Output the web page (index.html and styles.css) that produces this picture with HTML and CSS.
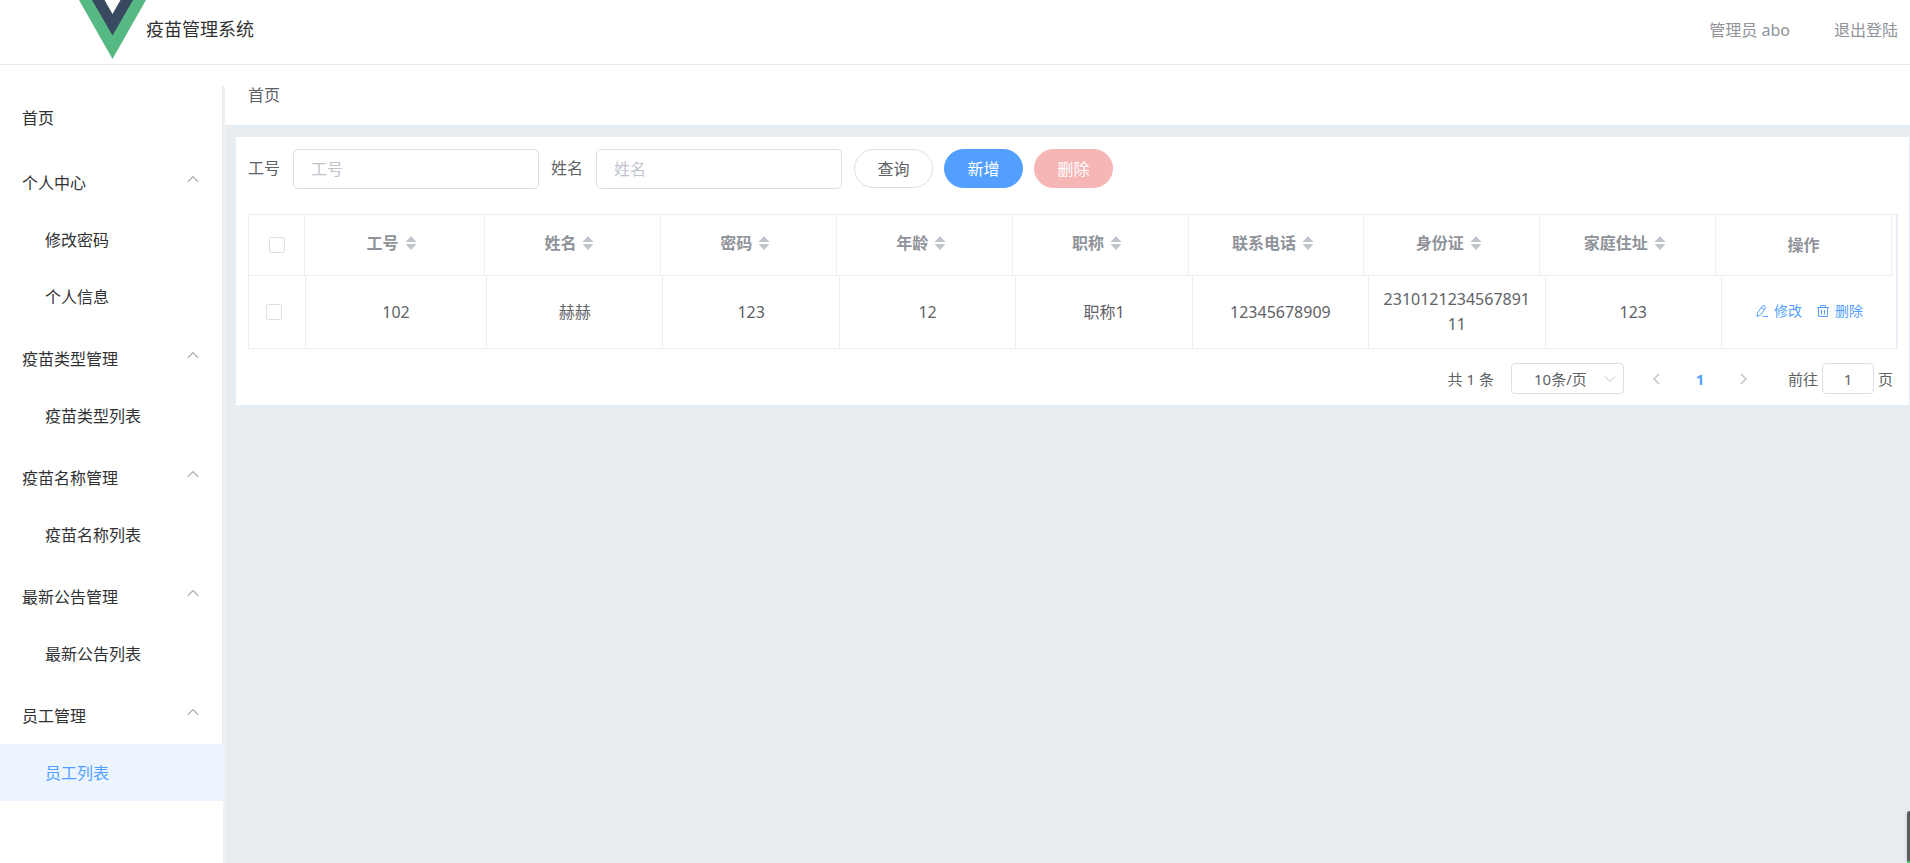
FILE: index.html
```html
<!DOCTYPE html>
<html lang="zh-CN">
<head>
<meta charset="utf-8">
<title>疫苗管理系统</title>
<link rel="stylesheet" href="styles.css">
</head>
<body>
<svg class="defs" aria-hidden="true">
  <symbol id="up" viewBox="0 0 12 12"><path d="M1.500 8.500 6 4l4.500 4.500" fill="none" stroke="currentColor"/></symbol>
  <symbol id="down" viewBox="0 0 12 12"><path d="M1 3.500 6 8.500l5-5" fill="none" stroke="currentColor"/></symbol>
  <symbol id="prev" viewBox="0 0 12 12"><path d="M9 1 4 6l5 5" fill="none" stroke="currentColor" stroke-width="1.500"/></symbol>
  <symbol id="next" viewBox="0 0 12 12"><path d="m3 1 5 5-5 5" fill="none" stroke="currentColor" stroke-width="1.500"/></symbol>
  <symbol id="sort" viewBox="0 0 12 16"><path d="M.5 7 6 1l5.500 6zM.5 9 6 15l5.500-6z" fill="currentColor"/></symbol>
  <symbol id="edit" viewBox="0 0 14 14"><path d="M2 12.500 2.500 8.800 7.300 2q.8-1 1.800-.3l1 .7q1 .8.300 1.800L5.600 11zM6.300 3.500l3 2.200M7.500 12.500H13" fill="none" stroke="currentColor"/></symbol>
  <symbol id="trash" viewBox="0 0 14 14"><path d="M1 3.500h12M2.500 3.500v9h9v-9M4.500 3.500v-2h5v2M5.500 6v4.500M8.500 6v4.500" fill="none" stroke="currentColor"/></symbol>
</svg>

<header class="header">
  <svg class="logo" viewBox="0 0 67 59" aria-hidden="true">
    <path d="M0 0h14l19.500 34L53 0h14L33.500 59z" fill="#56b882"/>
    <path d="M13 0h12.500l8 14 8-14H54L33.500 35.500z" fill="#39495f"/>
  </svg>
  <h1 class="title">疫苗管理系统</h1>
  <div class="account">
    <span>管理员 abo</span>
    <a class="logout" href="#">退出登陆</a>
  </div>
</header>

<div class="layout">
  <aside class="aside">
    <nav class="menu">
      <a class="entry home" href="#">首页</a>
      <section class="group">
        <button class="entry">个人中心<svg class="arrow"><use href="#up"/></svg></button>
        <a class="entry sub" href="#">修改密码</a>
        <a class="entry sub" href="#">个人信息</a>
      </section>
      <section class="group">
        <button class="entry">疫苗类型管理<svg class="arrow"><use href="#up"/></svg></button>
        <a class="entry sub" href="#">疫苗类型列表</a>
      </section>
      <section class="group">
        <button class="entry">疫苗名称管理<svg class="arrow"><use href="#up"/></svg></button>
        <a class="entry sub" href="#">疫苗名称列表</a>
      </section>
      <section class="group">
        <button class="entry">最新公告管理<svg class="arrow"><use href="#up"/></svg></button>
        <a class="entry sub" href="#">最新公告列表</a>
      </section>
      <section class="group">
        <button class="entry">员工管理<svg class="arrow"><use href="#up"/></svg></button>
        <a class="entry sub active" href="#">员工列表</a>
      </section>
    </nav>
  </aside>

  <main class="main">
    <div class="breadcrumb">首页</div>
    <div class="card">
      <form class="filters">
        <label for="no">工号</label>
        <input class="field" id="no" type="text" placeholder="工号">
        <label for="name">姓名</label>
        <input class="field" id="name" type="text" placeholder="姓名">
        <div class="buttons">
          <button class="btn" type="button">查询</button>
          <button class="btn primary" type="button">新增</button>
          <button class="btn danger" type="button" disabled>删除</button>
        </div>
      </form>

      <div class="grid">
        <table class="head">
          <colgroup><col class="c-check"><col class="c-no"><col span="8"></colgroup>
          <thead><tr>
            <th><input class="check" type="checkbox" aria-label="全选"></th>
            <th><span class="sortable">工号<svg class="sort"><use href="#sort"/></svg></span></th>
            <th><span class="sortable">姓名<svg class="sort"><use href="#sort"/></svg></span></th>
            <th><span class="sortable">密码<svg class="sort"><use href="#sort"/></svg></span></th>
            <th><span class="sortable">年龄<svg class="sort"><use href="#sort"/></svg></span></th>
            <th><span class="sortable">职称<svg class="sort"><use href="#sort"/></svg></span></th>
            <th><span class="sortable">联系电话<svg class="sort"><use href="#sort"/></svg></span></th>
            <th><span class="sortable">身份证<svg class="sort"><use href="#sort"/></svg></span></th>
            <th><span class="sortable">家庭住址<svg class="sort"><use href="#sort"/></svg></span></th>
            <th>操作</th>
          </tr></thead>
        </table>
        <table class="body">
          <colgroup><col class="c-check"><col class="c-no"><col span="7"><col class="c-action"></colgroup>
          <tbody><tr>
            <td class="pick"><input class="check" type="checkbox" aria-label="选择 102"></td>
            <td>102</td>
            <td>赫赫</td>
            <td>123</td>
            <td>12</td>
            <td>职称1</td>
            <td>12345678909</td>
            <td>231012123456789111</td>
            <td>123</td>
            <td><div class="actions">
              <button class="link"><svg class="icon"><use href="#edit"/></svg>修改</button>
              <button class="link"><svg class="icon"><use href="#trash"/></svg>删除</button>
            </div></td>
          </tr></tbody>
        </table>
      </div>

      <div class="pagination">
        <span class="total">共 1 条</span>
        <div class="size">
          <select class="sizes" aria-label="每页条数"><option>10条/页</option></select>
          <svg class="caret"><use href="#down"/></svg>
        </div>
        <div class="pager">
          <button class="page" aria-label="上一页" disabled><svg class="turn"><use href="#prev"/></svg></button>
          <button class="page current">1</button>
          <button class="page" aria-label="下一页" disabled><svg class="turn"><use href="#next"/></svg></button>
        </div>
        <label class="jump">前往<input class="goto" type="text" value="1">页</label>
      </div>
    </div>
  </main>
</div>
<div class="dock"></div>
</body>
</html>
```
FILE: styles.css
```css
* { box-sizing: border-box; }

body {
  margin: 0;
  min-height: 100vh;
  display: flex;
  flex-direction: column;
  background: #fff;
  color: #606266;
  font: 16px/24px "Noto Sans", "Noto Sans CJK SC", sans-serif;
}

button, input, select { font: inherit; color: inherit; margin: 0; }
button { border: 0; background: none; cursor: pointer; }
a { color: inherit; text-decoration: none; }
svg { display: block; flex: none; }
.defs { position: absolute; width: 0; height: 0; }

.header {
  display: flex;
  align-items: flex-start;
  height: 65px;
  padding: 0 12px 0 79px;
  border-bottom: 1px solid #e6eaee;
}
.logo { width: 67px; height: 59px; }
.title {
  margin: 0;
  line-height: 58px;
  font-size: 18px;
  font-weight: 400;
  color: #303133;
}
.account {
  display: flex;
  gap: 44px;
  margin-left: auto;
  line-height: 60px;
  color: #909399;
}

.layout { flex: 1; display: flex; }

.aside {
  flex: none;
  width: 225px;
  margin-top: 21px;
  border-right: 2px solid #f1f2f3;
}
.menu { padding-top: 3px; border-right: 1px solid #e6e6e6; }
.entry {
  display: flex;
  align-items: center;
  justify-content: space-between;
  width: 100%;
  height: 57px;
  padding: 0 22px;
  color: #303133;
  text-align: left;
}
.sub { padding-left: 45px; }
.home { margin-bottom: 8px; }
.group { margin-bottom: 5px; }
.group:last-child { margin-bottom: 0; }
.active { width: auto; margin-right: -1px; background: #ecf5ff; color: #539fff; }
.arrow { width: 14px; height: 14px; margin-bottom: 8px; color: #a6a9ae; }

.main { flex: 1; min-width: 0; background: #e8edf1; }
.breadcrumb { padding: 18px 23px; background: #fff; }
.card { margin: 12px 1px 0 11px; padding: 12px 11px 11px 12px; background: #fff; }

.filters { display: flex; gap: 12px; height: 40px; }
.filters label { padding-right: 1px; line-height: 38px; }
.field {
  width: 246px;
  padding: 0 17px;
  border: 1px solid #dcdfe6;
  border-radius: 5px;
  background: #fff;
}
.field::placeholder { color: #c0c4cc; opacity: 1; }
.buttons { display: flex; gap: 11px; }
.btn {
  width: 79px;
  height: 39px;
  padding: 0;
  border: 1px solid #dcdfe6;
  border-radius: 20px;
}
.primary { border-color: #539fff; background: #539fff; color: #fff; }
.danger { border-color: #f6b6b6; background: #f6b6b6; color: #fff; }

.grid {
  margin-top: 25px;
  border: 1px solid #ebeef5;
  border-right-width: 2px;
}
table { width: 100%; table-layout: fixed; border-collapse: separate; border-spacing: 0; }
.head { width: calc(100% - 4px); }
.head .c-check { width: 56px; }
.head .c-no { width: 180px; }
.body .c-check { width: 57px; }
.body .c-no { width: 181px; }
.body .c-action { width: 174px; }
th, td { padding: 0 12px; border-right: 1px solid #ebeef5; text-align: center; word-break: break-all; }
th { height: 61px; border-bottom: 1px solid #ebeef5; color: #909399; font-weight: 700; }
td { height: 72px; line-height: 25px; }
.body td:last-child { border-right: 0; }
.pick { padding-right: 18px; }
.sortable { display: flex; align-items: center; justify-content: center; padding-bottom: 4px; white-space: nowrap; }
.sort { width: 12px; height: 16px; margin: 0 6px; color: #c0c4cc; }
.check {
  display: block;
  appearance: none;
  width: 16px;
  height: 16px;
  margin: 0 auto;
  border: 1px solid #dcdfe6;
  border-radius: 2px;
  background: #fff;
}

.actions { display: flex; justify-content: center; gap: 14px; padding-bottom: 3px; }
.link { display: flex; align-items: center; gap: 5px; padding: 0; font-size: 14px; color: #539fff; white-space: nowrap; }
.icon { width: 14px; height: 14px; }

.pagination {
  display: flex;
  align-items: center;
  justify-content: flex-end;
  height: 31px;
  margin-top: 14px;
  padding-right: 5px;
  font-size: 15px;
}
.total { margin-right: 17px; }
.size { position: relative; }
.sizes {
  appearance: none;
  display: block;
  width: 113px;
  height: 31px;
  padding: 0 22px;
  border: 1px solid #dcdfe6;
  border-radius: 4px;
  background: #fff;
}
.caret { position: absolute; right: 8px; top: 10px; width: 12px; height: 12px; color: #c0c4cc; pointer-events: none; }
.pager { display: flex; margin: 0 22px 0 10px; }
.page { display: flex; align-items: center; justify-content: center; width: 44px; height: 31px; padding: 0; }
.current { color: #539fff; font-weight: 700; }
.turn { width: 12px; height: 12px; color: #c0c4cc; }
.jump { display: flex; align-items: center; gap: 4px; }
.goto { width: 52px; height: 31px; padding: 0 4px; border: 1px solid #dcdfe6; border-radius: 4px; text-align: center; }

.dock {
  position: fixed;
  right: 0;
  bottom: 0;
  width: 3px;
  height: 52px;
  border-bottom: 2px solid #3ecf6e;
  border-top-left-radius: 3px;
  background: #5a5c5a;
  box-shadow: 0 0 4px #c4c8cc;
}
```
